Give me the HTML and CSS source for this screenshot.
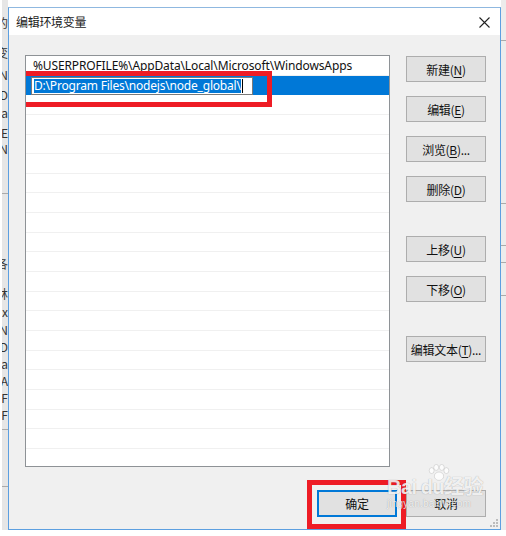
FILE: index.html
```html
<!DOCTYPE html>
<html lang="zh-CN">
<head>
  <meta charset="UTF-8">
  <title>编辑环境变量</title>
  <link rel="stylesheet" href="styles.css">
</head>
<body>
  <div class="screen">

    <!-- 背后窗口的边缘 -->
    <div class="bg-left">
      <div class="frag" style="margin-top:15px">的</div>
      <div class="frag" style="margin-top:14px">变</div>
      <div class="frag" style="margin-top:6px">N</div>
      <div class="frag" style="margin-top:4px">D</div>
      <div class="frag" style="margin-top:2px">'a</div>
      <div class="frag" style="margin-top:4px">E</div>
      <div class="frag" style="margin-top:0">'N</div>
      <div class="bg-line" style="margin-top:36px"></div>
      <div class="frag" style="margin-top:62px">各</div>
      <div class="frag" style="margin-top:14px">林</div>
      <div class="frag" style="margin-top:2px">x</div>
      <div class="frag" style="margin-top:2px">N</div>
      <div class="frag" style="margin-top:1px">D</div>
      <div class="frag" style="margin-top:1px">'a</div>
      <div class="frag" style="margin-top:1px">'A</div>
      <div class="frag" style="margin-top:1px">'F</div>
      <div class="frag" style="margin-top:1px">'F</div>
      <div class="bg-line" style="margin-top:6px"></div>
      <div class="bg-line" style="margin-top:56px"></div>
    </div>

    <!-- 对话框 -->
    <div class="dialog">
      <div class="titlebar">
        <span class="title">编辑环境变量</span>
        <svg class="close" width="11" height="11" viewBox="0 0 11 11">
          <path d="M0.5 0.5 L10.5 10.5 M10.5 0.5 L0.5 10.5" stroke="#222" stroke-width="1.1" fill="none"/>
        </svg>
      </div>

      <div class="body">
        <div class="main">
          <div class="list">
            <div class="row">%USERPROFILE%\AppData\Local\Microsoft\WindowsApps</div>
            <div class="row selected">
              <span class="edit"><span class="sel">D:\Program Files\nodejs\node_global\</span><span class="caret"></span></span>
              <span class="mark mark-row"></span>
            </div>
            <div class="row"></div>
            <div class="row"></div>
            <div class="row"></div>
            <div class="row"></div>
            <div class="row"></div>
            <div class="row"></div>
            <div class="row"></div>
            <div class="row"></div>
            <div class="row"></div>
            <div class="row"></div>
            <div class="row"></div>
            <div class="row"></div>
            <div class="row"></div>
            <div class="row"></div>
            <div class="row"></div>
            <div class="row"></div>
            <div class="row"></div>
            <div class="row"></div>
          </div>

          <div class="side">
            <button class="btn">新建(<u>N</u>)</button>
            <button class="btn">编辑(<u>E</u>)</button>
            <button class="btn">浏览(<u>B</u>)...</button>
            <button class="btn">删除(<u>D</u>)</button>
            <button class="btn gap">上移(<u>U</u>)</button>
            <button class="btn">下移(<u>O</u>)</button>
            <button class="btn gap">编辑文本(<u>T</u>)...</button>
          </div>
        </div>

        <div class="footer">
          <button class="btn btn-ok">确定<span class="mark mark-ok"></span></button>
          <button class="btn btn-cancel">取消</button>

          <!-- 百度经验水印 -->
          <div class="watermark">
            <svg class="paw" width="24" height="17" viewBox="0 0 26 18">
              <ellipse cx="5" cy="7" rx="2.6" ry="3.2"/>
              <ellipse cx="10" cy="3.5" rx="2.6" ry="3.2"/>
              <ellipse cx="16" cy="3.5" rx="2.6" ry="3.2"/>
              <ellipse cx="21" cy="7" rx="2.6" ry="3.2"/>
              <ellipse cx="13" cy="13" rx="5" ry="4.5"/>
            </svg>
            <div class="wm-big">Bai<span class="wm-du">du</span>经验</div>
            <div class="wm-small">jingyan.baidu.com</div>
          </div>
        </div>
      </div>

      <svg class="grip" width="9" height="9" viewBox="0 0 9 9">
        <rect x="7" y="1" width="2" height="2"/>
        <rect x="4" y="4" width="2" height="2"/>
        <rect x="7" y="4" width="2" height="2"/>
        <rect x="1" y="7" width="2" height="2"/>
        <rect x="4" y="7" width="2" height="2"/>
        <rect x="7" y="7" width="2" height="2"/>
      </svg>
    </div>

    <div class="bg-right">
      <div class="bg-line" style="margin-top:40px"></div>
      <div class="bg-line" style="margin-top:162px"></div>
      <div class="bg-line" style="margin-top:41px"></div>
      <div class="bg-line" style="margin-top:16px"></div>
      <div class="bg-line" style="margin-top:32px"></div>
    </div>
  </div>
</body>
</html>
```

FILE: styles.css
```css
body {
  margin: 0;
  padding: 0;
  background: #fff;
  font-family: "Noto Sans CJK SC", "Noto Sans", sans-serif;
  font-size: 12px;
  color: #000;
}
.screen {
  display: flex;
  height: 536px;
  overflow: hidden;
}

/* 背后窗口 */
.bg-left {
  width: 6px;
  margin-left: 2px;
  height: 530px;
  background: #e6e6e6;
  overflow: hidden;
  display: flex;
  flex-direction: column;
}
.frag {
  display: flex;
  justify-content: flex-end;
  white-space: nowrap;
  font-size: 12px;
  line-height: 16px;
  color: #333;
}
.bg-line {
  height: 1px;
  background: #aaa;
  flex-shrink: 0;
}
.bg-right {
  width: 5px;
  height: 530px;
  background: #ececec;
  display: flex;
  flex-direction: column;
}

/* 对话框 */
.dialog {
  position: relative;
  width: 491px;
  height: 521px;
  margin-top: 7px;
  border: 1px solid #5c9fe0;
  border-top-color: #8fb8e0;
  background: #f0f0f0;
  display: flex;
  flex-direction: column;
}
.titlebar {
  height: 27px;
  background: #fff;
  display: flex;
  align-items: center;
  justify-content: space-between;
  padding: 0 10px 0 7px;
}
.title {
  font-size: 12px;
  color: #1a1a1a;
  letter-spacing: -0.3px;
}
.close {
  margin-top: 1px;
}
.body {
  padding: 20px 14px 0 16px;
}
.main {
  display: flex;
  gap: 16px;
}

.list {
  width: 363px;
  height: 410px;
  border: 1px solid #8e9296;
  background: #fff;
  overflow: hidden;
}
.row {
  position: relative;
  height: 19.65px;
  box-sizing: border-box;
  border-bottom: 1px solid #f0f0f0;
  padding-left: 7px;
  line-height: 20px;
  white-space: nowrap;
  font-family: "Noto Sans", "Noto Sans CJK SC", sans-serif;
  font-size: 12px;
  letter-spacing: -0.13px;
  color: #111;
}
.selected {
  background: #0078d7;
  padding-left: 5px;
  padding-top: 1px;
  border-bottom-color: #0078d7;
}
.edit {
  display: inline-flex;
  align-items: center;
  width: 222px;
  height: 18px;
  box-sizing: border-box;
  background: #fff;
  border: 1px solid #7a7a7a;
  padding-left: 2px;
  vertical-align: top;
  letter-spacing: -0.2px;
}
.sel {
  background: #0078d7;
  color: #fff;
  line-height: 14px;
}
.caret {
  width: 1px;
  height: 14px;
  background: #000;
  margin-left: 1px;
}

/* 红色标注框 */
.mark {
  position: absolute;
  border: 5px solid #ee1c25;
  box-sizing: border-box;
  pointer-events: none;
}
.mark-row {
  left: -6px;
  top: -5px;
  width: 252px;
  height: 36px;
}
.mark-ok {
  left: -12px;
  top: -12px;
  width: 99px;
  height: 49px;
}

/* 按钮 */
.side {
  display: flex;
  flex-direction: column;
  gap: 14px;
  padding-top: 1px;
}
.btn {
  width: 80px;
  height: 26px;
  padding: 0;
  background: #e1e1e1;
  border: 1px solid #adadad;
  font-family: "Noto Sans CJK SC", "Noto Sans", sans-serif;
  font-size: 12px;
  color: #111;
  letter-spacing: -0.3px;
}
.btn u {
  text-decoration-thickness: 1px;
  text-underline-offset: 2px;
}
.side .gap {
  margin-top: 20px;
}

.footer {
  position: relative;
  display: flex;
  justify-content: flex-end;
  gap: 9px;
  margin-top: 23px;
}
.footer .btn {
  height: 27px;
}
.btn-ok {
  position: relative;
  border: 2px solid #0078d7;
}

/* 水印 */
.watermark {
  position: absolute;
  left: 362px;
  top: -26px;
  width: 92px;
  color: rgba(255, 255, 255, 0.85);
  text-shadow: 0 0 1px rgba(0, 0, 0, 0.35);
  pointer-events: none;
}
.paw {
  display: block;
  margin-left: 40px;
  fill: rgba(255, 255, 255, 0.8);
  stroke: rgba(0, 0, 0, 0.12);
}
.wm-big {
  margin-top: -5px;
  font-family: "Liberation Sans", "Noto Sans CJK SC", sans-serif;
  font-size: 20px;
  font-weight: bold;
  line-height: 22px;
  white-space: nowrap;
  letter-spacing: -0.5px;
}
.wm-du {
  margin-left: 4px;
}
.wm-small {
  font-family: "Liberation Sans", sans-serif;
  font-size: 10px;
  line-height: 12px;
  letter-spacing: 0.2px;
  white-space: nowrap;
}

.grip {
  position: absolute;
  right: 2px;
  bottom: 2px;
  fill: #bcbcbc;
}
```
